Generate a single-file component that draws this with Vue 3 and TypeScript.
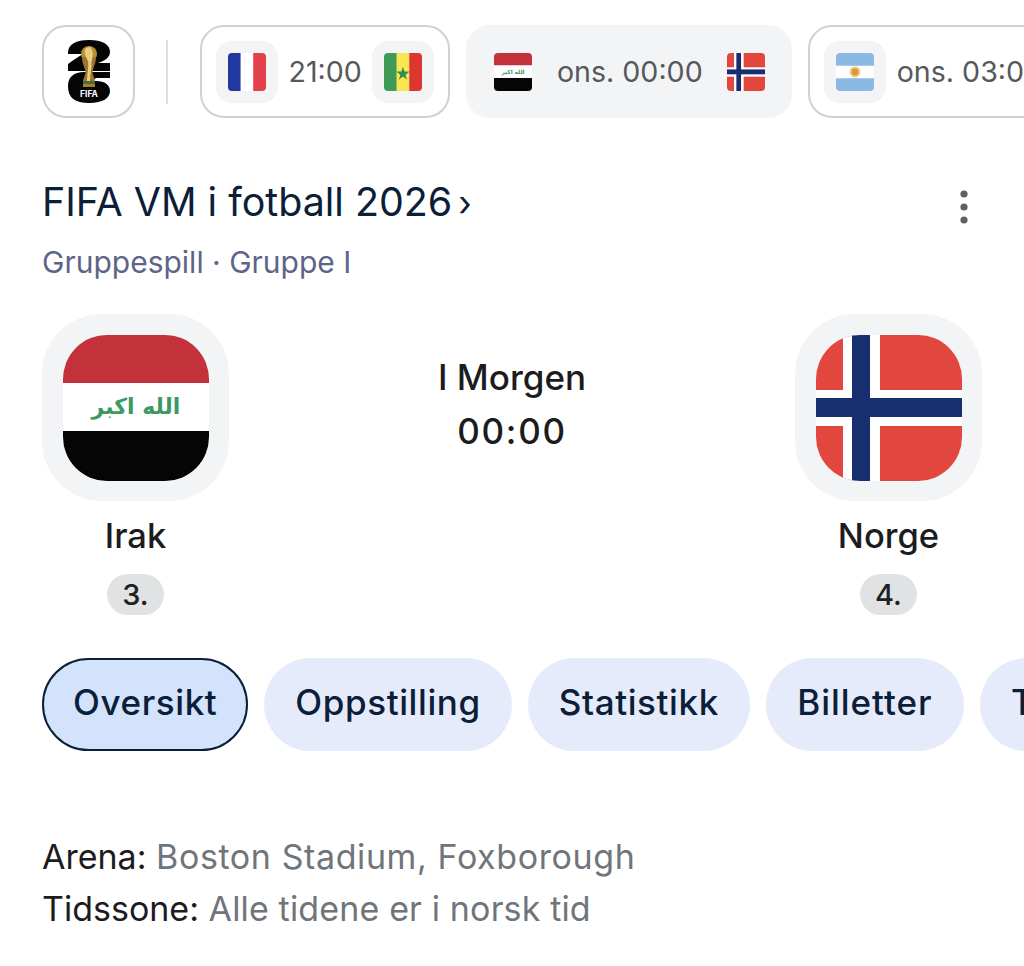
<script setup lang="ts">
interface Match {
  id: string
  home: string
  away: string
  time: string
  tinted: boolean
}

const matches: Match[] = [
  { id: 'm1', home: 'fr', away: 'sn', time: '21:00', tinted: false },
  { id: 'm2', home: 'iq', away: 'no', time: 'ons. 00:00', tinted: true },
  { id: 'm3', home: 'ar', away: '', time: 'ons. 03:00', tinted: false },
]

const tabs: string[] = ['Oversikt', 'Oppstilling', 'Statistikk', 'Billetter', 'Tabell']
</script>

<template>
  <main class="page">
    <svg class="defs" width="0" height="0" aria-hidden="true">
      <symbol id="fr" viewBox="0 0 146 146">
        <rect width="49" height="146" fill="#22389f" />
        <rect x="49" width="48" height="146" fill="#fff" />
        <rect x="97" width="49" height="146" fill="#e2404a" />
      </symbol>
      <symbol id="sn" viewBox="0 0 146 146">
        <rect width="49" height="146" fill="#3f9a55" />
        <rect x="49" width="48" height="146" fill="#fbe64f" />
        <rect x="97" width="49" height="146" fill="#dc3631" />
        <path d="M73 46l8 25h27l-22 16 8 26-21-16-21 16 8-26-22-16h27z" transform="translate(18 18) scale(.75)" fill="#2f8f4e" />
      </symbol>
      <symbol id="iq" viewBox="0 0 146 146">
        <rect width="146" height="48" fill="#c3323b" />
        <rect y="48" width="146" height="48" fill="#fff" />
        <rect y="96" width="146" height="50" fill="#050505" />
        <text x="73" y="79" text-anchor="middle" class="takbir">الله اكبر</text>
      </symbol>
      <symbol id="no" viewBox="0 0 146 146">
        <rect width="146" height="146" fill="#e1463f" />
        <rect x="27" width="37" height="146" fill="#fff" />
        <rect y="55" width="146" height="36" fill="#fff" />
        <rect x="36" width="18" height="146" fill="#172f6f" />
        <rect y="63" width="146" height="19" fill="#172f6f" />
      </symbol>
      <symbol id="ar" viewBox="0 0 146 146">
        <rect width="146" height="146" fill="#fff" />
        <rect width="146" height="49" fill="#8cb8e4" />
        <rect y="97" width="146" height="49" fill="#8cb8e4" />
        <circle cx="73" cy="73" r="21" fill="#ecc98a" />
        <circle cx="73" cy="73" r="13" fill="#d99a35" />
      </symbol>
    </svg>

    <nav class="strip">
      <div class="logo-chip">
        <svg class="fifa" viewBox="0 0 42 63" role="img" aria-label="FIFA 2026">
          <path d="M0 13C0 4 8 0 21 0C34 0 42 4 42 12C42 18 36 21 30 23H42V31H0V24C5 20 10 17 15 14H0Z" fill="#050505" />
          <path d="M0 46C0 37 6 32 16 32H42V38H28L24 41H28C37 41 42 45 42 51C42 58 35 63 21 63C7 63 0 58 0 46Z" fill="#050505" />
          <circle cx="21" cy="14" r="8" fill="#b98c38" />
          <path d="M14 17C14 24 17 27 17.5 32C17.5 35 15 38 15 42H27C27 38 24.5 35 24.5 32C25 27 28 24 28 17Z" fill="#9c7330" />
          <path d="M18 8C15 12 18 17 20 21C21 27 19 34 19 41H22C22 34 24 28 23.5 22C25 17 26 11 22 7Z" fill="#e8cd7f" />
          <rect x="15" y="41" width="12" height="3" fill="#4c6b3a" />
          <rect x="15" y="44" width="12" height="3" fill="#a97c2e" />
          <text x="21" y="57" text-anchor="middle" class="fifa-word">FIFA</text>
        </svg>
      </div>
      <span class="rule"></span>
      <div v-for="m in matches" :key="m.id" class="match" :class="{ tinted: m.tinted }">
        <span class="tile"><svg class="mini"><use :href="`#${m.home}`" /></svg></span>
        <span class="time">{{ m.time }}</span>
        <span v-if="m.away" class="tile"><svg class="mini"><use :href="`#${m.away}`" /></svg></span>
      </div>
    </nav>

    <header class="head">
      <div class="titles">
        <h1>FIFA VM i fotball 2026<span class="chev">›</span></h1>
        <p>Gruppespill · Gruppe I</p>
      </div>
      <svg class="more" width="10" height="36" viewBox="0 0 10 36" aria-label="Mer">
        <circle cx="5" cy="5" r="3.6" />
        <circle cx="5" cy="18" r="3.6" />
        <circle cx="5" cy="31" r="3.6" />
      </svg>
    </header>

    <section class="teams">
      <div class="team">
        <span class="big-tile"><svg class="big"><use href="#iq" /></svg></span>
        <strong>Irak</strong>
        <em>3.</em>
      </div>
      <div class="when">
        <div>I Morgen</div>
        <div class="kickoff">00:00</div>
      </div>
      <div class="team">
        <span class="big-tile"><svg class="big"><use href="#no" /></svg></span>
        <strong>Norge</strong>
        <em>4.</em>
      </div>
    </section>

    <div class="tabs">
      <button v-for="(t, i) in tabs" :key="t" class="tab" :class="{ on: i === 0 }">{{ t }}</button>
    </div>

    <section class="facts">
      <p><b>Arena:</b> <span class="venue">Boston Stadium, Foxborough</span></p>
      <p><b>Tidssone:</b> <span class="zone">Alle tidene er i norsk tid</span></p>
    </section>
  </main>
</template>

<style>
html, body { margin: 0; background: #fff; overflow: hidden; }
</style>

<style scoped>
.page {
  width: 1024px;
  height: 966px;
  overflow: hidden;
  box-sizing: border-box;
  padding: 25px 0 0 42px;
  font-family: Inter, "Liberation Sans", sans-serif;
  background: #fff;
}
.defs { position: absolute; }
.takbir { font: 700 22px "DejaVu Sans", sans-serif; fill: #3b9a62; }
.fifa-word { font: 700 8.5px Inter, sans-serif; fill: #fff; }

.strip { display: flex; align-items: center; height: 93px; gap: 16px; width: 1100px; }
.logo-chip {
  width: 93px; height: 93px; box-sizing: border-box; flex: none;
  border: 2px solid #cfd1d3; border-radius: 24px;
  display: flex; align-items: center; justify-content: center;
}
.fifa { width: 42px; height: 63px; }
.rule { width: 2px; height: 64px; background: #dcdee0; margin: 0 16px 0 15px; flex: none; }
.match {
  height: 93px; box-sizing: border-box; flex: none;
  border: 2px solid #cfd1d3; border-radius: 24px;
  padding: 0 14px; display: flex; align-items: center; gap: 10.5px;
}
.match.tinted { background: #f3f4f6; border-color: #f3f4f6; gap: 12.5px; padding: 0 13px 0 14px; }
.tile {
  width: 62px; height: 62px; border-radius: 16px; background: #f3f4f6;
  display: flex; align-items: center; justify-content: center; flex: none;
}
.mini { width: 38px; height: 38px; border-radius: 4px; display: block; }
.time { font-size: 28.6px; color: #56585c; white-space: nowrap; }

.head { display: flex; justify-content: space-between; padding: 59px 55px 0 0; }
h1 { margin: 0; height: 50px; font-size: 39.4px; font-weight: 400; line-height: 50px; color: #0b2038; }
.chev { margin-left: 6px; font-size: 35px; }
.titles p { margin: 15px 0 0; font-size: 30px; line-height: 40px; color: #5d6488; }
.more { fill: #5f6064; margin-top: 12px; }

.teams { display: flex; justify-content: space-between; padding: 32px 42px 0 0; }
.team { width: 187px; display: flex; flex-direction: column; align-items: center; }
.big-tile {
  width: 187px; height: 187px; border-radius: 60px; background: #f3f4f6;
  display: flex; align-items: center; justify-content: center;
}
.big { width: 146px; height: 146px; border-radius: 44px; display: block; }
.team strong { font-size: 34.5px; font-weight: 500; color: #1c1c1e; line-height: 46px; margin-top: 12px; }
.team em {
  font-style: normal; font-weight: 500; font-size: 29px; line-height: 41px; height: 41px; padding: 0 15px;
  background: #e0e2e4; color: #1f2022; border-radius: 21px; margin-top: 15px;
}
.when { text-align: center; font-size: 35px; font-weight: 500; line-height: 54px; color: #1c1c1e; padding-top: 36px; }
.kickoff { letter-spacing: 1.7px; }

.tabs { display: flex; gap: 16px; margin-top: 43px; width: 1100px; }
.tab {
  height: 93px; border-radius: 47px; border: 0; padding: 0 31px 6px; flex: none;
  background: #e6ebfb; color: #0b2038; font: 500 35px Inter, sans-serif; letter-spacing: .6px;
}
.tab:nth-child(4) { letter-spacing: .95px; padding: 0 31.5px 6px; }
.tab.on { background: #d3e3fb; border: 2px solid #0b2038; padding: 0 29px 6px; }

.facts { margin-top: 80px; }
.facts p { margin: 0; font-size: 34px; line-height: 52px; color: #70757a; }
.facts b { font-weight: 400; color: #1c1c1e; }
.venue { letter-spacing: .6px; }
.zone { letter-spacing: .15px; }
</style>
